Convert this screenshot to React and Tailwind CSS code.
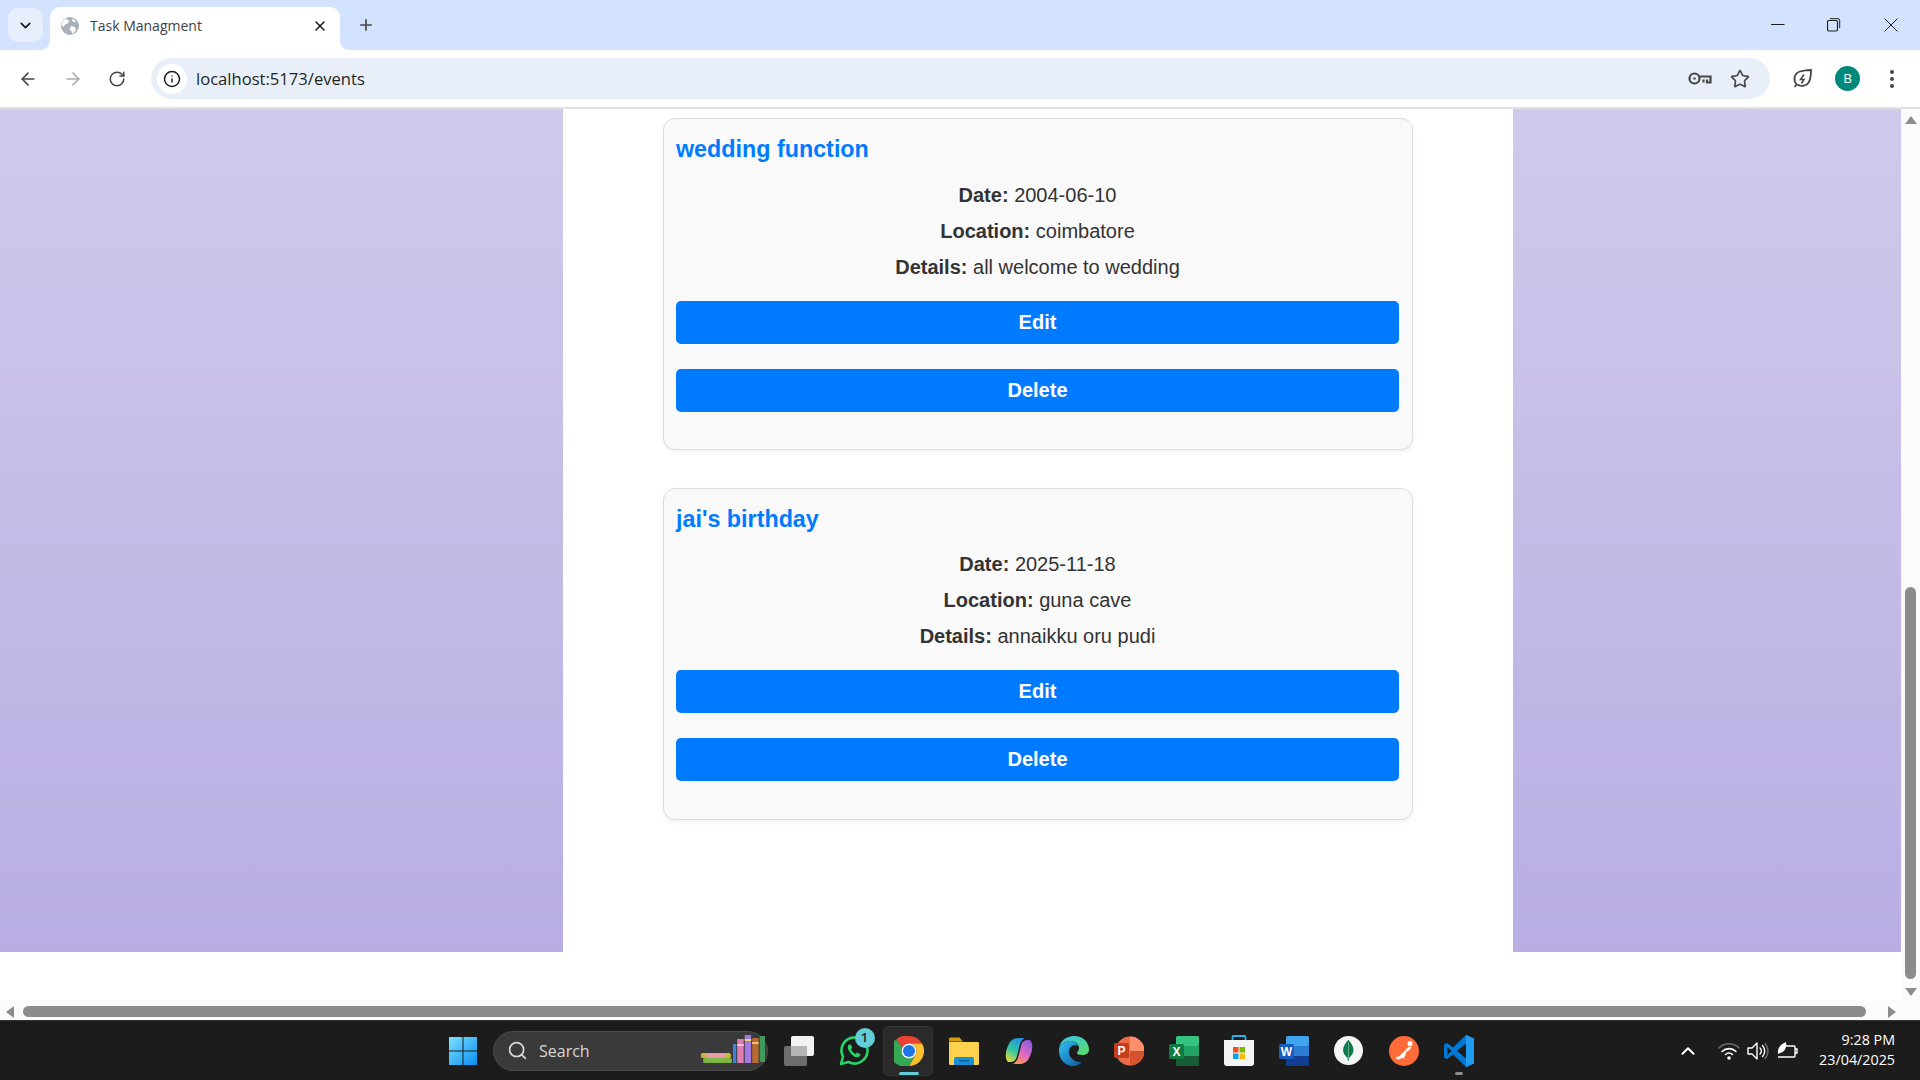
import React from 'react';
import { ArrowLeft, ArrowRight, RotateCw, Info, Star, ChevronDown, ChevronUp, X, Plus, Search } from 'lucide-react';

const events = [
  { title: 'wedding function', date: '2004-06-10', location: 'coimbatore', details: 'all welcome to wedding', bodyGap: 'mt-[14px]' },
  { title: "jai's birthday", date: '2025-11-18', location: 'guna cave', details: 'annaikku oru pudi', bodyGap: 'mt-[13px]' },
];

const EventCard = ({ event }) => (
  <div className="w-[750px] h-[332px] mb-[38px] rounded-[12px] border border-[#dddddd] bg-[#f9f9f9] pl-[12px] pr-[13px] pt-[16px] shadow-[0_2px_5px_rgba(0,0,0,0.06)]">
    <h3 className="h-[28px] text-[23.3px] leading-[28px] font-bold text-[#007bff]">{event.title}</h3>
    <div className={`${event.bodyGap} text-center text-[20px] leading-[36px] text-[#333333]`}>
      <p><strong>Date:</strong> {event.date}</p>
      <p><strong>Location:</strong> {event.location}</p>
      <p><strong>Details:</strong> {event.details}</p>
    </div>
    <button className="mt-[16px] block h-[43px] w-full rounded-[5px] bg-[#007bff] pb-[2px] text-[20px] font-bold text-white">Edit</button>
    <button className="mt-[25px] block h-[43px] w-full rounded-[5px] bg-[#007bff] pb-[2px] text-[20px] font-bold text-white">Delete</button>
  </div>
);

const TabStrip = () => (
  <div className="relative flex h-[50px] items-end bg-[#d3e3fd] text-[#1f1f1f]">
    <div className="mb-[8px] ml-[8px] flex h-[34px] w-[35px] items-center justify-center rounded-[10px] bg-[#e8effc]">
      <ChevronDown size={17} strokeWidth={2.6} />
    </div>
    <div className="relative ml-[7px] flex h-[43px] w-[290px] items-center rounded-t-[10px] bg-white pb-[6px] pl-[11px] pr-[11px]">
      <svg className="absolute -left-[9px] bottom-0" width="9" height="9" viewBox="0 0 9 9"><path d="M9 0V9H0A9 9 0 0 0 9 0Z" fill="#fff" /></svg>
      <svg className="absolute -right-[9px] bottom-0" width="9" height="9" viewBox="0 0 9 9"><path d="M0 0V9H9A9 9 0 0 1 0 0Z" fill="#fff" /></svg>
      <svg width="18" height="18" viewBox="0 0 18 18">
        <circle cx="9" cy="9" r="9" fill="#a9b0b9" />
        <path d="M5 1.500 8 4 7 6.500 4.500 7 2.500 10 0.500 8A9 9 0 0 1 5 1.500ZM10 9l4 1 1 3-3.500 4-1-3-2-1.500ZM12 1.500l3 3-2.500.5L11 3.500Z" fill="#fff" />
      </svg>
      <span className="ml-[11px] flex-1 font-['Open_Sans',sans-serif] text-[14px] text-[#3c3f43]">Task Managment</span>
      <X className="mr-[1px]" size={16} strokeWidth={2.4} />
    </div>
    <div className="ml-[17px] mb-[16px] text-[#444746]"><Plus size={18} strokeWidth={2.2} /></div>
    <div className="ml-auto mb-[18px] flex items-center text-[#1f1f1f]">
      <svg className="mr-[42px]" width="14" height="14" viewBox="0 0 14 14"><path d="M0 6.500H13.500" stroke="currentColor" strokeWidth="1" /></svg>
      <svg className="mr-[43px]" width="14" height="14" viewBox="0 0 14 14" fill="none" stroke="currentColor"><rect x=".5" y="2.500" width="10" height="10.500" rx="1.500" strokeWidth="1.200" /><path d="M3 .7h8.200a1.500 1.500 0 0 1 1.500 1.500V10" /></svg>
      <svg className="mr-[22px]" width="14" height="14" viewBox="0 0 14 14" fill="none" stroke="currentColor"><path d="M.5.500l13 13M13.500.500l-13 13" /></svg>
    </div>
  </div>
);

const Toolbar = () => (
  <div className="flex h-[59px] items-center rounded-t-[10px] border-b-2 border-[#dfe1e3] bg-white">
    <ArrowLeft className="ml-[18px] text-[#474747]" size={20} strokeWidth={2} />
    <ArrowRight className="ml-[25px] text-[#a8abaf]" size={20} strokeWidth={2} />
    <RotateCw className="ml-[25px] text-[#474747]" size={18} strokeWidth={2.1} />
    <div className="ml-[25px] flex h-[41px] w-[1619px] items-center rounded-full bg-[#e9eff9] pl-[6px] pr-[20px]">
      <div className="flex h-[30px] w-[30px] items-center justify-center rounded-full bg-white text-[#1f1f1f]">
        <Info size={18} strokeWidth={2} />
      </div>
      <span className="ml-[9px] mt-[1px] flex-1 font-['Open_Sans',sans-serif] text-[16.6px] text-[#1f1f1f]">localhost:5173/events</span>
      <svg width="24" height="15" viewBox="0 0 24 15" fill="none" stroke="#474747" strokeWidth="2.200" className="mr-[18px]">
        <circle cx="6.500" cy="7.500" r="5" /><circle cx="6.500" cy="7.500" r="1.200" fill="#474747" stroke="none" /><path d="M11.500 5.500H22.500V11.500H19V8.500M15.500 8.500V11.500" />
      </svg>
      <Star className="text-[#474747]" size={20} strokeWidth={2} />
    </div>
    <svg className="ml-[22px]" width="21" height="21" viewBox="0 0 21 21" fill="none" stroke="#474747" strokeWidth="1.800">
      <path d="M2.500 19l2-2.500C1 12 2 5.500 8 3.500c3.500-1 8-1.500 11-1.500 0 3.500 0 8-2 12-2 4-7.500 5-11.500 2.500" />
      <path d="M12 6.500 8.500 11.500h3.500L9.500 15.500" strokeWidth="1.500" />
    </svg>
    <div className="ml-[22px] flex h-[25px] w-[25px] items-center justify-center rounded-full bg-[#00897b] font-['Open_Sans',sans-serif] text-[13.5px] text-white">B</div>
    <svg className="ml-[30px]" width="4" height="18" viewBox="0 0 4 18" fill="#474747"><circle cx="2" cy="2" r="2" /><circle cx="2" cy="9" r="2" /><circle cx="2" cy="16" r="2" /></svg>
  </div>
);

const WindowsLogo = () => (
  <svg width="30" height="30" viewBox="0 0 30 30">
    <defs><linearGradient id="win" x1="0" y1="0" x2="1" y2="1"><stop offset="0" stopColor="#7be0ff" /><stop offset="1" stopColor="#0a8ff0" /></linearGradient></defs>
    <path d="M1 1h13.500v13.500H1zM15.500 1H29v13.500H15.500zM1 15.500h13.500V29H1zM15.500 15.500H29V29H15.500z" fill="url(#win)" />
  </svg>
);

const Books = () => (
  <svg width="64" height="32" viewBox="0 0 60 32" preserveAspectRatio="none">
    <rect x="0" y="18" width="28" height="5" rx="1.500" fill="#c9b43a" /><rect x="5" y="18.500" width="18" height="4" fill="#ea9ba8" />
    <rect x="2" y="23" width="27" height="5" rx="1.500" fill="#7fb744" />
    <rect x="30" y="9" width="3" height="19" fill="#3f80e0" />
    <rect x="34" y="4" width="6" height="24" fill="#e27db3" /><rect x="34" y="9" width="6" height="2" fill="#f6c9de" />
    <rect x="41" y="0" width="6" height="28" fill="#a27be0" /><rect x="41" y="4" width="6" height="2" fill="#f0d36a" />
    <rect x="48" y="3" width="6" height="25" fill="#b96a2e" /><rect x="48" y="7" width="6" height="2" fill="#eec17e" />
    <rect x="55" y="1" width="5" height="26" fill="#3f9a5b" />
  </svg>
);

const WhatsApp = () => (
  <svg width="32" height="32" viewBox="0 0 32 32">
    <path d="M3 29l2-7.500A13 13 0 1 1 10.500 27Z" fill="none" stroke="#25d366" strokeWidth="2.600" strokeLinejoin="round" />
    <path d="M11 9.500c-2 1.500-1.500 4.500 1 8s6 5.500 8.500 4.500c2-.8 2-2.500 1.500-3l-3-1.500-1.500 1.500c-1.500-.5-4-3-4.500-4.700L14.200 13l-1.300-3.500Z" fill="#25d366" />
  </svg>
);

const ChromeIcon = () => (
  <svg width="30" height="30" viewBox="0 0 30 30">
    <path d="M15 0a15 15 0 0 1 13 7.500H15a7.500 7.500 0 0 0-6.500 3.750L2 3.500A15 15 0 0 1 15 0Z" fill="#ea4335" />
    <path d="M28 7.500A15 15 0 0 1 15 30l6.500-11.250A7.500 7.500 0 0 0 21.500 11.250 7.500 7.500 0 0 0 15 7.500Z" fill="#fbc02d" />
    <path d="M15 30A15 15 0 0 1 2 3.500L8.500 11.250a7.500 7.500 0 0 0 0 7.500 7.500 7.500 0 0 0 13 0Z" fill="#34a853" />
    <circle cx="15" cy="15" r="7.500" fill="#fff" /><circle cx="15" cy="15" r="6" fill="#1a73e8" />
  </svg>
);

const FolderIcon = () => (
  <svg width="30" height="30" viewBox="0 0 30 30">
    <path d="M0 3a1.500 1.500 0 0 1 1.500-1.500h9L14 5.500H0Z" fill="#d99e05" />
    <path d="M0 6h29a1 1 0 0 1 1 1v21a1 1 0 0 1-1 1H1a1 1 0 0 1-1-1Z" fill="#fcd24f" />
    <path d="M5 29v-6a2 2 0 0 1 2-2h16a2 2 0 0 1 2 2v6Z" fill="#1b8fd6" /><rect x="10" y="24" width="10" height="1.500" fill="#0a5da0" />
  </svg>
);

const CopilotIcon = () => (
  <svg width="28" height="28" viewBox="0 0 28 28">
    <defs>
      <linearGradient id="cpA" x1="0.7" y1="0" x2="0.2" y2="1"><stop offset="0" stopColor="#1f8fe8" /><stop offset=".55" stopColor="#35c8a0" /><stop offset="1" stopColor="#e6d93f" /></linearGradient>
      <linearGradient id="cpB" x1="0.8" y1="0" x2="0.2" y2="1"><stop offset="0" stopColor="#8a5be0" /><stop offset=".55" stopColor="#e06ac0" /><stop offset="1" stopColor="#ff9a4d" /></linearGradient>
    </defs>
    <path d="M9 2C11 .5 18 1 20 1 16 3 15 7 14 11L12 19C11 24 8 25 5 25H3C0 22 0 15 3 9 4 6 6 3 9 2Z" fill="url(#cpA)" />
    <path d="M19 26C17 27.500 10 27 8 27 12 25 13 21 14 17L16 9C17 4 20 3 23 3H25C28 6 28 13 25 19 24 22 22 25 19 26Z" fill="url(#cpB)" />
  </svg>
);

const EdgeIcon = () => (
  <svg width="30" height="30" viewBox="0 0 30 30">
    <defs>
      <linearGradient id="edgA" x1="0" y1="0" x2="1" y2="1"><stop offset="0" stopColor="#35c1f1" /><stop offset="1" stopColor="#0c59a4" /></linearGradient>
      <linearGradient id="edgB" x1="0" y1="0" x2="1" y2="1"><stop offset="0" stopColor="#35c1f1" /><stop offset="1" stopColor="#5dde5e" /></linearGradient>
    </defs>
    <path d="M15 0C24 0 30 6 30 14c0 3-3 5-7 5-3 0-5-1-5-2 0-1 2-2 2-5 0-4-4-7-8-7C6 5 1 8 0 13 1 5 7 0 15 0Z" fill="url(#edgB)" />
    <path d="M0 13C1 8 6 5 12 5c3 0 6 2 7 5-4-2-9 0-9 6 0 6 6 11 13 10-2 2-5 4-9 4C6 30 0 23 0 15Z" fill="url(#edgA)" />
  </svg>
);

const OfficeSquare = ({ letter, bg, c1, c2, c3 }) => (
  <svg width="30" height="30" viewBox="0 0 30 30">
    <rect x="7" y="0" width="23" height="10" rx="1.500" fill={c1} />
    <rect x="7" y="10" width="23" height="10" fill={c2} />
    <rect x="7" y="20" width="23" height="10" rx="1.500" fill={c3} />
    <rect x="0" y="8" width="15" height="15" rx="1.500" fill={bg} />
    <text x="7.500" y="20" textAnchor="middle" fontFamily="'Liberation Sans',sans-serif" fontWeight="700" fontSize="12" fill="#fff">{letter}</text>
  </svg>
);

const PowerPointIcon = () => (
  <svg width="30" height="30" viewBox="0 0 30 30">
    <circle cx="16" cy="15" r="14.500" fill="#ed6c47" />
    <path d="M16 .5A14.500 14.500 0 0 1 30.500 15H16Z" fill="#ff8f6b" />
    <path d="M16 15h14.500A14.500 14.500 0 0 1 16 29.500Z" fill="#d35230" />
    <rect x="0" y="7" width="15" height="15" rx="1.500" fill="#c43e1c" />
    <text x="7.500" y="19" textAnchor="middle" fontFamily="'Liberation Sans',sans-serif" fontWeight="700" fontSize="12" fill="#fff">P</text>
  </svg>
);

const StoreIcon = () => (
  <svg width="30" height="32" viewBox="0 0 30 32">
    <path d="M8.500 6V2a1 1 0 0 1 1-1h11a1 1 0 0 1 1 1v4" fill="none" stroke="#25b6f0" strokeWidth="1.800" />
    <path d="M0 5h30v23a3 3 0 0 1-3 3H3a3 3 0 0 1-3-3Z" fill="#f4f4f4" />
    <rect x="9" y="12" width="5.500" height="5.500" fill="#f25022" /><rect x="15.500" y="12" width="5.500" height="5.500" fill="#7fba00" />
    <rect x="9" y="18.500" width="5.500" height="5.500" fill="#00a4ef" /><rect x="15.500" y="18.500" width="5.500" height="5.500" fill="#ffb900" />
  </svg>
);

const MongoIcon = () => (
  <svg width="29" height="29" viewBox="0 0 29 29">
    <circle cx="14.500" cy="14.500" r="14.500" fill="#f5f5f5" />
    <path d="M14.500 4c3 3.500 5 6.500 5 10 0 4-3 6.500-4.500 8l-.4 3h-.6l-.4-3c-1.500-1.500-4.500-4-4.500-8 0-3.500 2-6.500 5-10Z" fill="#0f7a4f" />
    <path d="M14.500 6v17" stroke="#7bc79a" strokeWidth=".7" />
  </svg>
);

const PostmanIcon = () => (
  <svg width="30" height="30" viewBox="0 0 30 30">
    <circle cx="15" cy="15" r="15" fill="#ff6c37" />
    <circle cx="21" cy="7.500" r="2.500" fill="#fff" />
    <path d="M20 10.500l-8 8-5 4.500 3 .5 6-3 1-4 4-3 1.500-2.500Z" fill="#fff" />
    <path d="M9 20l-2 2.500M13 19l2 4" stroke="#fff" strokeWidth="1" />
  </svg>
);

const VSCodeIcon = () => (
  <svg width="30" height="32" viewBox="0 0 30 32">
    <path d="M22 0 30 3.500v25L22 32 9 19.500 3 24 0 22.500V9.500L3 8l6 4.500Z" fill="#0078d4" />
    <path d="M22 0l8 3.500v25L22 32Z" fill="#1f9cf0" />
    <path d="M22 8.500 13 16l9 7.500Z" fill="#1c1c1c" />
    <path d="M3.500 12 7.500 16 3.500 20Z" fill="#1c1c1c" />
  </svg>
);

const TaskbarSlot = ({ children, active, dot }) => (
  <div className="relative flex h-[50px] w-[55px] items-center justify-center">
    {active && <div className="absolute inset-y-0 left-[2px] right-[3px] rounded-[5px] border border-[#333333] bg-[#2a2a2a]" />}
    <div className="relative flex">{children}</div>
    {active && <div className="absolute bottom-[1px] h-[3px] w-[20px] rounded-full bg-[#62cdd8]" />}
    {dot && <div className="absolute bottom-[1px] h-[3px] w-[8px] rounded-full bg-[#8e8e8e]" />}
  </div>
);

const Taskbar = () => (
  <div className="flex h-[60px] items-center border-t border-[#333333] bg-[#1c1c1c] pl-[448px]">
    <WindowsLogo />
    <div className="ml-[15px] flex h-[40px] w-[275px] items-center rounded-full border border-[#4a4a4a] bg-[#3a3a3a] pl-[13px] pr-[2px] text-[#d6d6d6]">
      <Search size={21} strokeWidth={2} />
      <span className="ml-[11px] flex-1 font-['Open_Sans',sans-serif] text-[16px]">Search</span>
      <Books />
    </div>
    <div className="ml-[3px] flex items-center">
      <TaskbarSlot>
        <div className="relative h-[30px] w-[30px]">
          <div className="absolute bottom-0 left-0 h-[20px] w-[23px] rounded-[2px] bg-[#6d6d6d]" />
          <div className="absolute right-0 top-0 h-[20px] w-[23px] rounded-[2px] bg-[#f2f2f2]" />
          <div className="absolute left-[7px] top-[10px] h-[10px] w-[16px] bg-[#b5b5b5]" />
        </div>
      </TaskbarSlot>
      <TaskbarSlot>
        <WhatsApp />
        <div className="absolute right-[-5px] top-[-7px] flex h-[20px] w-[20px] items-center justify-center rounded-full bg-[#62cdd8] font-['Open_Sans',sans-serif] text-[13px] font-semibold text-[#1c1c1c]">1</div>
      </TaskbarSlot>
      <TaskbarSlot active><ChromeIcon /></TaskbarSlot>
      <TaskbarSlot><FolderIcon /></TaskbarSlot>
      <TaskbarSlot><CopilotIcon /></TaskbarSlot>
      <TaskbarSlot><EdgeIcon /></TaskbarSlot>
      <TaskbarSlot><PowerPointIcon /></TaskbarSlot>
      <TaskbarSlot><OfficeSquare letter="X" bg="#107c41" c1="#33c481" c2="#21a366" c3="#185c37" /></TaskbarSlot>
      <TaskbarSlot><StoreIcon /></TaskbarSlot>
      <TaskbarSlot><OfficeSquare letter="W" bg="#185abd" c1="#41a5ee" c2="#2b7cd3" c3="#103f91" /></TaskbarSlot>
      <TaskbarSlot><MongoIcon /></TaskbarSlot>
      <TaskbarSlot><PostmanIcon /></TaskbarSlot>
      <TaskbarSlot dot><VSCodeIcon /></TaskbarSlot>
    </div>
    <div className="ml-[191px] text-white"><ChevronUp size={22} strokeWidth={2.2} /></div>
    <svg className="ml-[19px]" width="22" height="18" viewBox="0 0 22 18" fill="none" stroke="#fff" strokeWidth="1.600" strokeLinecap="round">
      <path d="M1 6a14 14 0 0 1 20 0" stroke="#6b6b6b" /><path d="M4 9.500a10 10 0 0 1 14 0" /><path d="M7.500 12.500a5 5 0 0 1 7 0" /><circle cx="11" cy="16" r="1" fill="#fff" />
    </svg>
    <svg className="ml-[7px]" width="22" height="20" viewBox="0 0 22 20" fill="none" stroke="#fff" strokeWidth="1.400" strokeLinecap="round" strokeLinejoin="round">
      <path d="M1 7v6h4l5 5V2L5 7Z" /><path d="M13 7a4 4 0 0 1 0 6M15.500 4.500a8 8 0 0 1 0 11" /><path d="M18 2.500a11 11 0 0 1 0 15" stroke="#6b6b6b" />
    </svg>
    <svg className="ml-[7px]" width="22" height="20" viewBox="0 0 22 20" fill="none" stroke="#fff" strokeWidth="1.400">
      <path d="M9 5h9a1 1 0 0 1 1 1v9a1 1 0 0 1-1 1H2" /><path d="M19 8h2v4h-2" />
      <path d="M2 13C1 7 5 3 10 1c1 5-1 10-6 11Z" fill="#fff" stroke="none" />
    </svg>
    <div className="ml-auto pr-[25px] text-right font-['Open_Sans',sans-serif] text-[14.3px] leading-[20px] text-white -mt-[2px]">
      <div>9:28 PM</div>
      <div>23/04/2025</div>
    </div>
  </div>
);

const Triangle = ({ points, className }) => (
  <svg className={className} width="12" height="12" viewBox="0 0 12 12"><polygon points={points} fill="#8c8c8c" /></svg>
);

const App = () => (
  <div className="flex h-screen w-full flex-col overflow-hidden font-['Liberation_Sans',sans-serif]">
    <TabStrip />
    <Toolbar />
    <div className="flex min-h-0 flex-1 bg-white">
      <div className="flex-1">
        <div className="flex h-[843px] bg-[linear-gradient(180deg,#cfcaeb_0%,#b9ade3_100%)]">
          <div className="w-[563px]" />
          <div className="flex w-[950px] flex-col items-center bg-white pt-[9px]">
            {events.map(event => <EventCard key={event.title} event={event} />)}
          </div>
        </div>
      </div>
      <div className="flex w-[19px] flex-col items-center bg-[#fbfbfb]">
        <Triangle className="mt-[5px]" points="0,10 6,2 12,10" />
        <div className="mt-[461px] h-[392px] w-[11px] rounded-full bg-[#8c8c8c]" />
        <Triangle className="mt-[7px]" points="0,2 6,10 12,2" />
      </div>
    </div>
    <div className="flex h-[20px] items-center bg-[#fbfbfb] pt-[3px]">
      <Triangle className="ml-[4px]" points="10,0 2,6 10,12" />
      <div className="ml-[7px] h-[11px] w-[1843px] rounded-full bg-[#8c8c8c]" />
      <Triangle className="ml-[20px]" points="2,0 10,6 2,12" />
    </div>
    <Taskbar />
  </div>
);

export default App;
